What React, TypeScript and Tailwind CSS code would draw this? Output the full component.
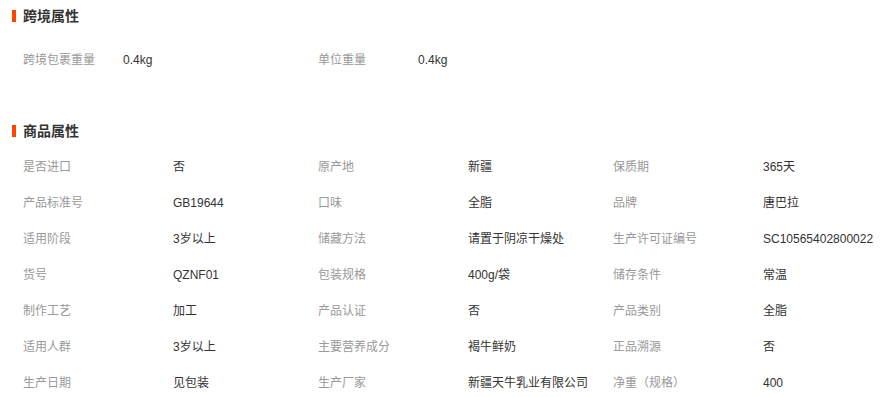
const crossBorder: [string, string][] = [
  ["跨境包裹重量", "0.4kg"],
  ["单位重量", "0.4kg"],
]

const goods: [string, string][] = [
  ["是否进口", "否"],
  ["原产地", "新疆"],
  ["保质期", "365天"],
  ["产品标准号", "GB19644"],
  ["口味", "全脂"],
  ["品牌", "唐巴拉"],
  ["适用阶段", "3岁以上"],
  ["储藏方法", "请置于阴凉干燥处"],
  ["生产许可证编号", "SC10565402800022"],
  ["货号", "QZNF01"],
  ["包装规格", "400g/袋"],
  ["储存条件", "常温"],
  ["制作工艺", "加工"],
  ["产品认证", "否"],
  ["产品类别", "全脂"],
  ["适用人群", "3岁以上"],
  ["主要营养成分", "褐牛鲜奶"],
  ["正品溯源", "否"],
  ["生产日期", "见包装"],
  ["生产厂家", "新疆天牛乳业有限公司"],
  ["净重（规格）", "400"],
]

function Title({ text }: { text: string }) {
  return (
    <div className="flex h-[32px] items-center pl-[12px]">
      <span className="mr-[7px] h-[12px] w-[4px] bg-[#ff4400]" />
      <span className="text-[14px] font-bold leading-none text-[#333]">{text}</span>
    </div>
  )
}

function Grid({ items, labelW }: { items: [string, string][]; labelW: string }) {
  return (
    <div className="grid grid-cols-[295px_295px_295px] pl-[23px]">
      {items.map(([k, v]) => (
        <div key={k} className="flex h-[36px] items-center text-[12px]">
          <span className={`${labelW} shrink-0 text-[#999]`}>{k}</span>
          <span className="text-[#333]">{v}</span>
        </div>
      ))}
    </div>
  )
}

export default function App() {
  return (
    <div
      className="h-[397px] w-[889px] overflow-hidden bg-white"
      style={{ fontFamily: '"Liberation Sans", "Noto Sans CJK SC", sans-serif' }}
    >
      <Title text="跨境属性" />
      <div className="pt-[10px]">
        <Grid items={crossBorder} labelW="w-[100px]" />
      </div>
      <div className="mt-[37px]">
        <Title text="商品属性" />
        <div className="pt-[2px]">
          <Grid items={goods} labelW="w-[150px]" />
        </div>
      </div>
    </div>
  )
}
